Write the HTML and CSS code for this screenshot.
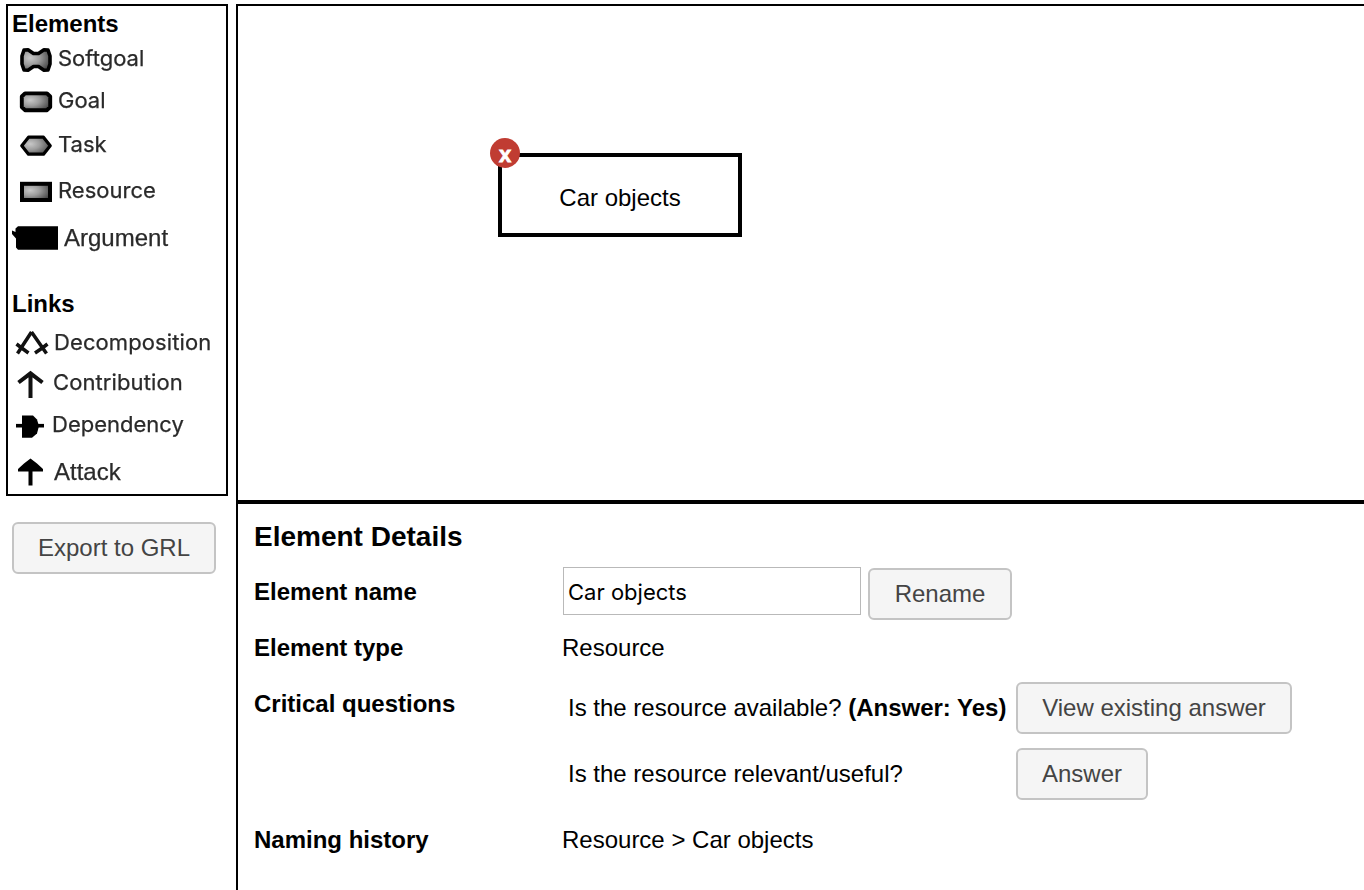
FILE: index.html
```html
<!DOCTYPE html>
<html lang="en">
<head>
<meta charset="utf-8">
<title>Goal model editor</title>
<link rel="stylesheet" href="styles.css">
</head>
<body>
<div class="app">
  <aside class="sidebar">
    <nav class="palette">
      <svg class="defs" width="0" height="0" aria-hidden="true">
        <defs>
          <radialGradient id="metal" cx="0.3" cy="0.4" r="0.75">
            <stop offset="0" stop-color="#c8c8c8"/>
            <stop offset="0.45" stop-color="#9c9c9c"/>
            <stop offset="1" stop-color="#484848"/>
          </radialGradient>
        </defs>
      </svg>
      <h2 class="palette-title">Elements</h2>
      <div class="tool tool-softgoal">
        <svg class="icon" width="50" height="30" viewBox="0 0 50 30"><path d="M16 5 L20 4.800 L25.500 8.500 H30.500 L36 4.800 L40 5 L42 11 V19 L40 25 L36 25.200 L30.500 21.500 H25.500 L20 25.200 L16 25 L14 19 V11Z" fill="url(#metal)" stroke="#000" stroke-width="3.600" stroke-linejoin="round"/></svg>
        <span class="label">Softgoal</span>
      </div>
      <div class="tool tool-goal">
        <svg class="icon" width="50" height="30" viewBox="0 0 50 30"><path d="M17 7.400 H39 L42.200 10.500 V21 L39 24.200 H17 L13.800 21 V10.500Z" fill="url(#metal)" stroke="#000" stroke-width="3.900" stroke-linejoin="round"/></svg>
        <span class="label">Goal</span>
      </div>
      <div class="tool tool-task">
        <svg class="icon" width="50" height="30" viewBox="0 0 50 30"><path d="M13.800 15.700 L20.500 7.200 H35.500 L42.200 15.700 L35.500 24.200 H20.500Z" fill="url(#metal)" stroke="#000" stroke-width="3.200" stroke-linejoin="round"/></svg>
        <span class="label">Task</span>
      </div>
      <div class="tool tool-resource">
        <svg class="icon" width="50" height="30" viewBox="0 0 50 30"><rect x="14" y="7.800" width="28" height="16.200" fill="url(#metal)" stroke="#000" stroke-width="4"/></svg>
        <span class="label">Resource</span>
      </div>
      <div class="tool tool-argument">
        <svg class="icon" width="50" height="30" viewBox="0 0 50 30"><path d="M4 7.500 L7.500 9 V5.500 L10 3.200 H50 V26.700 H10 L8 24.500 V15.500 L4 11Z" fill="#000"/></svg>
        <span class="label plain">Argument</span>
      </div>
      <h2 class="palette-title links-title">Links</h2>
      <div class="tool tool-decomposition">
        <svg class="icon" width="50" height="30" viewBox="0 0 50 30"><path d="M23.500 4 L9.500 25.500 M23.500 4 L38.500 25.500 M8.500 16 L13 19.500 L20.500 25 M39.500 16 L35 19.500 L27 25" fill="none" stroke="#111" stroke-width="3.500"/></svg>
        <span class="label">Decomposition</span>
      </div>
      <div class="tool tool-contribution">
        <svg class="icon" width="50" height="30" viewBox="0 0 50 30"><path d="M22.500 29 V4.500 M10.500 13.500 L22.500 4.300 L34.500 13.500" fill="none" stroke="#111" stroke-width="4"/></svg>
        <span class="label">Contribution</span>
      </div>
      <div class="tool tool-dependency">
        <svg class="icon" width="50" height="30" viewBox="0 0 50 30"><path d="M8 14.700 H36" stroke="#000" stroke-width="3.600"/><path d="M14 4.500 H25 L29 8.500 L31 15 L29 22.500 L24 26.700 H14Z" fill="#000"/></svg>
        <span class="label">Dependency</span>
      </div>
      <div class="tool tool-attack">
        <svg class="icon" width="50" height="30" viewBox="0 0 50 30"><path d="M20.500 29.500 V15.500 H10 V13 L16 7.500 L22.500 2.500 L29 7.500 L35 13 V15.500 H24.500 V29.500Z" fill="#000"/></svg>
        <span class="label plain">Attack</span>
      </div>
    </nav>
    <button class="btn export">Export to GRL</button>
  </aside>
  <main class="workspace">
    <section class="canvas">
      <div class="node">Car objects<span class="node-close">x</span></div>
    </section>
    <section class="details">
      <h1 class="details-title">Element Details</h1>
      <dl class="fields">
        <dt>Element name</dt>
        <dd class="rename"><input class="name-input" type="text" value="Car objects"><button class="btn rename-btn">Rename</button></dd>
        <dt>Element type</dt>
        <dd>Resource</dd>
        <dt>Critical questions</dt>
        <dd class="questions">
          <span>Is the resource available? <b>(Answer: Yes)</b></span><button class="btn view-btn">View existing answer</button>
          <span>Is the resource relevant/useful?</span><button class="btn answer-btn">Answer</button>
        </dd>
        <dt>Naming history</dt>
        <dd>Resource &gt; Car objects</dd>
      </dl>
    </section>
  </main>
</div>
</body>
</html>
```
FILE: styles.css
```css
* { box-sizing: border-box; }

body {
  margin: 0;
  background: #fff;
  color: #000;
  font: 24px/28px "Liberation Sans", Arial, sans-serif;
  overflow: hidden;
}

.app {
  display: flex;
  gap: 8px;
  height: 890px;
  padding: 4px 0 0 6px;
}

.sidebar { flex: 0 0 222px; }

.palette {
  height: 492px;
  border: 2px solid #000;
}

.defs { display: block; }

.palette-title {
  height: 34px;
  margin: 0;
  padding-left: 4px;
  font-size: 24px;
  line-height: 36px;
}

.links-title {
  height: 36px;
  margin-top: 24px;
}

.tool {
  display: flex;
  align-items: center;
  filter: blur(0.45px);
}

.icon {
  flex: none;
  width: 50px;
  height: 30px;
}

.label {
  padding-bottom: 2px;
  color: #2a2a2a;
  font-family: Inter, sans-serif;
  font-size: 22px;
  font-weight: 400;
  line-height: 28px;
  -webkit-text-stroke: 0.25px #2a2a2a;
  white-space: nowrap;
}

.label.plain {
  padding-bottom: 0;
  font-family: "Liberation Sans", Arial, sans-serif;
  font-size: 24px;
}

.tool-softgoal { height: 40px; }
.tool-softgoal .label { padding-bottom: 4px; }
.tool-goal { height: 42px; }
.tool-task { height: 46px; }
.tool-resource { height: 46px; }
.tool-argument { height: 48px; }
.tool-argument .label { margin-left: 6px; }
.tool-decomposition { height: 41px; }
.tool-decomposition .label { margin-left: -4px; letter-spacing: 0.1px; }
.tool-contribution { height: 41px; }
.tool-contribution .label { margin-left: -5px; padding-bottom: 3px; letter-spacing: 0.1px; }
.tool-dependency { height: 44px; }
.tool-dependency .label { margin-left: -6px; padding-bottom: 4px; }
.tool-attack { height: 46px; }
.tool-attack .label { margin-left: -4px; padding-top: 1px; }

.btn {
  height: 52px;
  padding: 0;
  border: 2px solid #c4c4c4;
  border-radius: 6px;
  background: #f5f5f5;
  color: #444;
  font: 24px/48px "Liberation Sans", Arial, sans-serif;
}

.export {
  display: block;
  width: 204px;
  margin: 26px 0 0 6px;
}

.workspace {
  flex: 1;
  border-left: 2px solid #000;
}

.canvas {
  position: relative;
  height: 500px;
  border-top: 2px solid #000;
  border-bottom: 4px solid #000;
}

.node {
  position: absolute;
  left: 260px;
  top: 147px;
  width: 244px;
  height: 84px;
  border: 4px solid #000;
  line-height: 82px;
  text-align: center;
}

.node-close {
  position: absolute;
  left: -12px;
  top: -19px;
  width: 30px;
  height: 30px;
  border-radius: 50%;
  background: #c03c32;
  color: #fff;
  font-size: 22px;
  font-weight: bold;
  line-height: 34px;
  -webkit-text-stroke: 0.8px #fff;
}

.details { padding-left: 16px; }

.details-title {
  height: 60px;
  margin: 0;
  font-size: 28px;
  line-height: 65px;
}

.fields {
  display: grid;
  grid-template-columns: 308px 1fr;
  grid-template-rows: 56px 56px 136px 56px;
  margin: 0;
  line-height: 56px;
}

.fields dt { font-weight: bold; }
.fields dd { margin: 0; }

.rename {
  display: flex;
  gap: 7px;
  padding: 3px 0 0 1px;
}

.name-input {
  width: 298px;
  height: 48px;
  padding: 2px 4px 0;
  border: 1px solid #b9b9b9;
  border-radius: 0;
  outline: 0;
  background: #fff;
  color: #000;
  font: 22px Inter, sans-serif;
}

.rename-btn {
  width: 144px;
  margin-top: 1px;
}

.questions {
  display: grid;
  grid-template-columns: 448px 1fr;
  grid-auto-rows: 52px;
  gap: 14px 0;
  padding: 6px 0 0 6px;
  line-height: 52px;
  white-space: nowrap;
}

.view-btn { width: 276px; }
.answer-btn { width: 132px; }
```
